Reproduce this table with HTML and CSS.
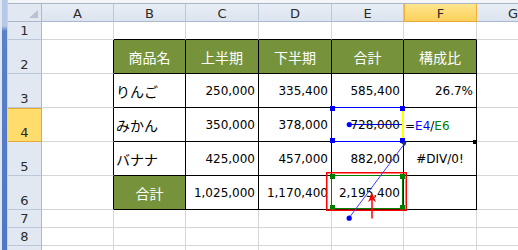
FILE: index.html
```html
<!DOCTYPE html>
<html lang="ja">
<head>
<meta charset="utf-8">
<title>Sheet</title>
<link rel="stylesheet" href="styles.css">
</head>
<body>
<div class="page">
  <div class="sheet">
    <div class="lbar"></div>
    <div class="topstrip"></div>

    <div class="corner"><span class="tri"></span></div>
    <div class="ch">A</div><div class="ch">B</div><div class="ch">C</div><div class="ch">D</div><div class="ch">E</div><div class="ch sel">F</div><div class="ch last">G</div>

    <div class="rh">1</div>
    <div class="c"></div><div class="c above"></div><div class="c above"></div><div class="c above"></div><div class="c above"></div><div class="c above"></div><div class="c last"></div>

    <div class="rh">2</div>
    <div class="c left"></div>
    <div class="c t hd jp">商品名</div><div class="c t hd jp">上半期</div><div class="c t hd jp">下半期</div><div class="c t hd jp">合計</div><div class="c t hd jp">構成比</div>
    <div class="c last"></div>

    <div class="rh">3</div>
    <div class="c left"></div>
    <div class="c t jp">りんご</div><div class="c t num">250,000</div><div class="c t num">335,400</div><div class="c t num">585,400</div><div class="c t num">26.7%</div>
    <div class="c last"></div>

    <div class="rh sel">4</div>
    <div class="c left"></div>
    <div class="c t jp">みかん</div><div class="c t num">350,000</div><div class="c t num">378,000</div><div class="c t num">728,000</div><div class="c t formula">=<span class="ref-b">E4</span>/<span class="ref-g">E6</span></div>
    <div class="c last"></div>

    <div class="rh">5</div>
    <div class="c left"></div>
    <div class="c t jp">バナナ</div><div class="c t num">425,000</div><div class="c t num">457,000</div><div class="c t num">882,000</div><div class="c t ctr">#DIV/0!</div>
    <div class="c last"></div>

    <div class="rh">6</div>
    <div class="c left"></div>
    <div class="c t hd jp">合計</div><div class="c t num">1,025,000</div><div class="c t num">1,170,400</div><div class="c t num">2,195,400</div><div class="c t"></div>
    <div class="c last"></div>

    <div class="rh">7</div>
    <div class="c"></div><div class="c"></div><div class="c"></div><div class="c"></div><div class="c"></div><div class="c"></div><div class="c last"></div>

    <div class="rh">8</div>
    <div class="c"></div><div class="c"></div><div class="c"></div><div class="c"></div><div class="c"></div><div class="c"></div><div class="c last"></div>

    <div class="rh"></div>
    <div class="c"></div><div class="c"></div><div class="c"></div><div class="c"></div><div class="c"></div><div class="c"></div><div class="c last"></div>
  </div>

  <svg class="overlay" width="518" height="250" viewBox="0 0 518 250">
    <!-- range finder E4 (blue) -->
    <rect x="331.5" y="107.5" width="72" height="34" fill="none" stroke="#0000ff" stroke-width="1"/>
    <rect x="402" y="106" width="2" height="36" fill="#ffff00"/>
    <rect x="330" y="106" width="5" height="5" fill="#0000ff"/>
    <rect x="400" y="106" width="5" height="5" fill="#0000ff"/>
    <rect x="330" y="138" width="5" height="5" fill="#0000ff"/>
    <rect x="400" y="138" width="5" height="5" fill="#0000ff"/>

    <!-- range finder E6 (green) -->
    <rect x="331.5" y="175.5" width="71" height="33" fill="none" stroke="#008000" stroke-width="1"/>
    <rect x="330" y="174" width="5" height="5" fill="#008000"/>
    <rect x="400" y="174" width="5" height="5" fill="#008000"/>
    <rect x="330" y="205" width="5" height="5" fill="#008000"/>
    <rect x="400" y="205" width="5" height="5" fill="#008000"/>

    <!-- annotation red box -->
    <rect x="326.75" y="172.75" width="79.5" height="37.5" fill="none" stroke="#ff0000" stroke-width="1.5"/>

    <!-- tracer arrows -->
    <line x1="349" y1="124.5" x2="402" y2="124.5" stroke="#0000cc" stroke-width="1"/>
    <circle cx="349.3" cy="124.6" r="2.6" fill="#0000ff"/>
    <line x1="349" y1="218" x2="405" y2="143" stroke="#3b3bff" stroke-width="1"/>
    <circle cx="349.2" cy="218.2" r="2.6" fill="#0000ff"/>
    <polygon points="407,141 401,143 405,146" fill="#1b3a6b"/>

    <!-- red arrow -->
    <line x1="372" y1="218.5" x2="372" y2="199" stroke="#ff0000" stroke-width="1.5"/>
    <polygon points="372,193 376,202 372,199.5 368,202" fill="#ff0000"/>

    <!-- fill handle -->
    <rect x="473" y="140" width="4" height="4" fill="#000"/>
  </svg>
</div>
</body>
</html>
```

FILE: styles.css
```css
html, body {
  margin: 0;
  padding: 0;
  background: #ffffff;
  overflow: hidden;
}

.page {
  position: relative;
  width: 518px;
  height: 250px;
  overflow: hidden;
}

.sheet {
  display: grid;
  width: 549px;
  grid-template-columns: 8px 34px 72px 72px 73px 73px 72px 73px 72px;
  grid-template-rows: 4px 18px 18px 34px 34px 34px 34px 34px 18px 18px 18px;
  font-family: "DejaVu Sans", "Noto Sans CJK JP", sans-serif;
  font-size: 12px;
  color: #000;
}

.lbar {
  grid-column: 1;
  grid-row: 1 / -1;
  background:
    linear-gradient(#b7c8e6 0, #b7c8e6 26px, #5a80ca 31px, #4f76c4 100%) 2px 0 / 5px 100% no-repeat,
    #dfe7f3;
  border-right: 1px solid #c9d4e4;
  box-sizing: border-box;
}

.topstrip {
  grid-column: 2 / -1;
  grid-row: 1;
  background: #f3f5f8;
  border-bottom: 1px solid #a9b5c6;
  box-sizing: border-box;
}

.corner {
  box-sizing: border-box;
  background: #e1e8f1;
  border-right: 1px solid #a9b8cc;
  border-bottom: 1px solid #a9b8cc;
  display: flex;
  align-items: flex-end;
  justify-content: flex-end;
  padding: 0 3px 3px 0;
}

.tri {
  width: 0;
  height: 0;
  border-left: 9px solid transparent;
  border-bottom: 8px solid #b8c3d1;
}

.ch {
  box-sizing: border-box;
  background: linear-gradient(#e8eef6, #dce4ef);
  border-right: 1px solid #bac7d8;
  border-bottom: 1px solid #a9b8cc;
  display: flex;
  align-items: center;
  justify-content: center;
  font-size: 13px;
  color: #2a2a2a;
  padding-top: 1px;
}

.ch.sel {
  background: linear-gradient(#ffe68f, #fbd05a);
  border-right-color: #f0b23c;
  border-bottom-color: #e9a93a;
  border-left: 1px solid #f0b23c;
}

.ch.last {
  border-right: none;
}

.rh {
  box-sizing: border-box;
  background: #e1e8f1;
  border-right: 1px solid #a9b8cc;
  border-bottom: 1px solid #bac7d8;
  display: flex;
  align-items: flex-end;
  justify-content: center;
  padding-bottom: 1px;
  font-size: 13px;
  color: #2a2a2a;
}

.rh.sel {
  background: #ffdc6c;
  border-right-color: #e9a93a;
  border-bottom-color: #e9a93a;
  border-top: 1px solid #e9a93a;
}

.c {
  box-sizing: border-box;
  border-right: 1px solid #d6d6d6;
  border-bottom: 1px solid #d6d6d6;
  display: flex;
  align-items: center;
  padding: 0 2px;
  white-space: nowrap;
  overflow: hidden;
}

.c.last {
  border-right: none;
}

.c.above {
  border-bottom-color: #000;
}

.c.left {
  border-right-color: #000;
}

.c.t {
  border-right-color: #000;
  border-bottom-color: #000;
}

.c.hd {
  background: #76933c;
  color: #ffffff;
  justify-content: center;
}

.jp {
  font-family: "Noto Sans CJK JP", "DejaVu Sans", sans-serif;
  font-size: 14px;
}

.c.num {
  justify-content: flex-end;
  padding-right: 3px;
}

.c.ctr {
  justify-content: center;
}

.c.formula {
  padding-left: 1px;
  padding-top: 2px;
}

.ref-b {
  color: #0000ff;
}

.ref-g {
  color: #008000;
}

.overlay {
  position: absolute;
  left: 0;
  top: 0;
  pointer-events: none;
}
```
